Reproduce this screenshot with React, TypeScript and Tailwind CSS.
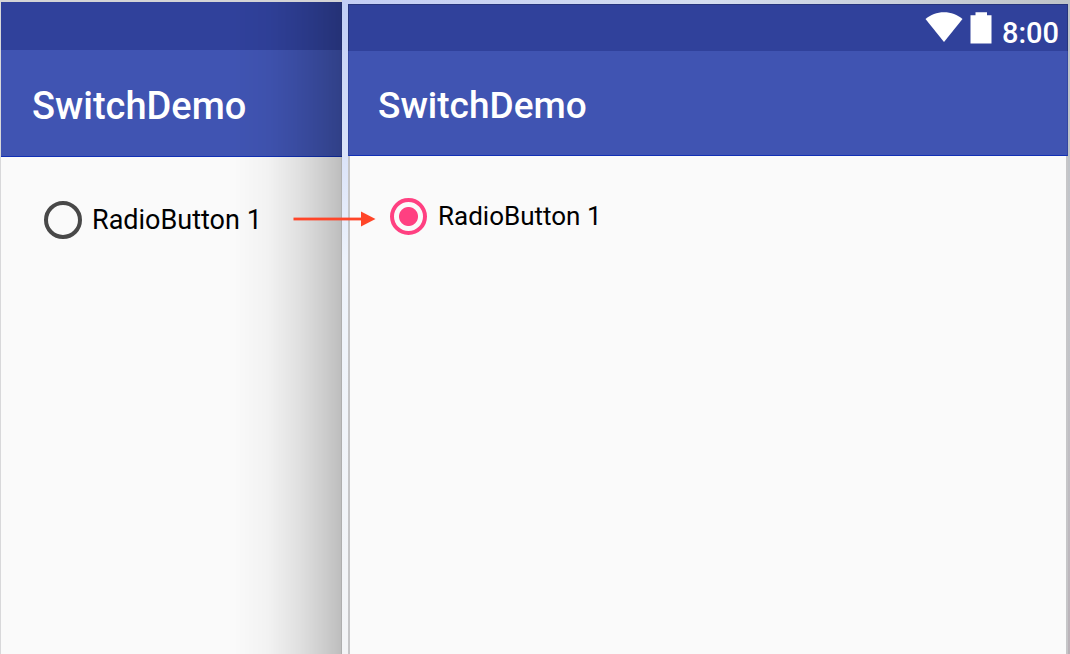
import { useState } from "react";

function WifiIcon() {
  return (
    <svg className="h-[30px] w-[38px]" viewBox="0 0 38 30" fill="#fff" aria-hidden="true">
      <path d="M0.5 7C5.5 2.6 12 0.2 19 0.2S32.500 2.600 37.500 7L19 30Z" />
    </svg>
  );
}

function BatteryIcon() {
  return (
    <svg className="h-8 w-[22px]" viewBox="0 0 22 32" fill="#fff" aria-hidden="true">
      <path d="M5.500 0.300H17V3.200H21.500V31.500H0.500V3.200H5.500Z" />
    </svg>
  );
}

function Arrow() {
  return (
    <svg className="absolute top-[17px] -left-[97px] h-4 w-[83px]" viewBox="0 0 83 16" fill="#ff4528" aria-hidden="true">
      <rect x="0.500" y="6.600" width="70" height="2.800" />
      <path d="M68 0.500L82.500 8L68 15.500Z" />
    </svg>
  );
}

export default function App() {
  const [first, setFirst] = useState(false);
  const [second, setSecond] = useState(true);

  return (
    <div className="flex min-h-screen overflow-hidden bg-[#fafafa] font-['Roboto',sans-serif] text-black">
      <section className="relative flex w-[342px] shrink-0 flex-col border-t-2 border-l border-t-[#d4d4d6] border-l-[#d8d8da]">
        <div className="h-12 bg-[#30419b]" />
        <header className="flex h-[107px] items-center border-b border-[#1130b5] bg-[#4054b2] px-[31px] pt-[6px]">
          <h1 className="text-[38px] leading-[48px] font-medium whitespace-nowrap text-white">SwitchDemo</h1>
        </header>
        <main className="flex pt-[41px] pl-[43px]">
          <label className="flex items-center gap-[10px] text-[27px] leading-[44px] whitespace-nowrap">
            <input
              type="radio"
              name="before"
              checked={first}
              onChange={() => setFirst(true)}
              className="size-[38px] shrink-0 appearance-none rounded-full border-4 border-[#484848]"
            />
            RadioButton 1
          </label>
        </main>
        <div className="pointer-events-none absolute inset-y-0 right-0 w-[108px] border-r border-black/30 bg-[linear-gradient(to_right,transparent,rgb(0_0_0/0.03)_32%,rgb(0_0_0/0.09)_56%,rgb(0_0_0/0.18)_84%,rgb(0_0_0/0.24))]" />
      </section>

      <div className="flex min-w-0 flex-1 flex-col bg-linear-to-r from-[#c3cdf5] via-[#d4ddf0] to-[#bfc3c8] pt-1">
        <div className="flex flex-1 bg-linear-to-b from-[#c1cdf5] via-[#eef3fb] via-40% to-[#f3f4f6] pl-[6px]">
          <section className="flex min-w-0 flex-1 flex-col">
            <div className="flex h-[47px] items-start justify-end border-x border-t border-[#26347d] bg-[#30419b] pr-2 text-white">
              <div className="flex items-start gap-[7px] pt-[7px]">
                <WifiIcon />
                <BatteryIcon />
                <span className="ml-[3px] pt-[5px] text-[29px] leading-8 font-medium">8:00</span>
              </div>
            </div>
            <header className="flex h-[105px] items-center border-x border-b border-x-[#3446a0] border-b-[#1130b5] bg-[#4054b2] px-[29px] pt-[6px]">
              <h1 className="text-[37px] leading-[48px] font-medium whitespace-nowrap text-white">SwitchDemo</h1>
            </header>
            <main className="flex flex-1 items-start border-x-2 border-[#c6c6c8] bg-[#fafafa] pt-[38px] pl-10">
              <div className="relative">
                <Arrow />
                <label className="flex items-center gap-[11px] text-[26px] leading-[44px] whitespace-nowrap">
                  <input
                    type="radio"
                    name="after"
                    checked={second}
                    onChange={() => setSecond(true)}
                    className="size-[37px] shrink-0 appearance-none rounded-full border-4 border-[#ff4081] checked:bg-[radial-gradient(circle,#ff4081_9px,transparent_10px)]"
                  />
                  RadioButton 1
                </label>
              </div>
            </main>
          </section>
          <div className="w-[2px] shrink-0 bg-linear-to-b from-[#bfc3c8] via-[#c3c5c9] to-[#b9b2b8]" />
        </div>
      </div>
    </div>
  );
}
